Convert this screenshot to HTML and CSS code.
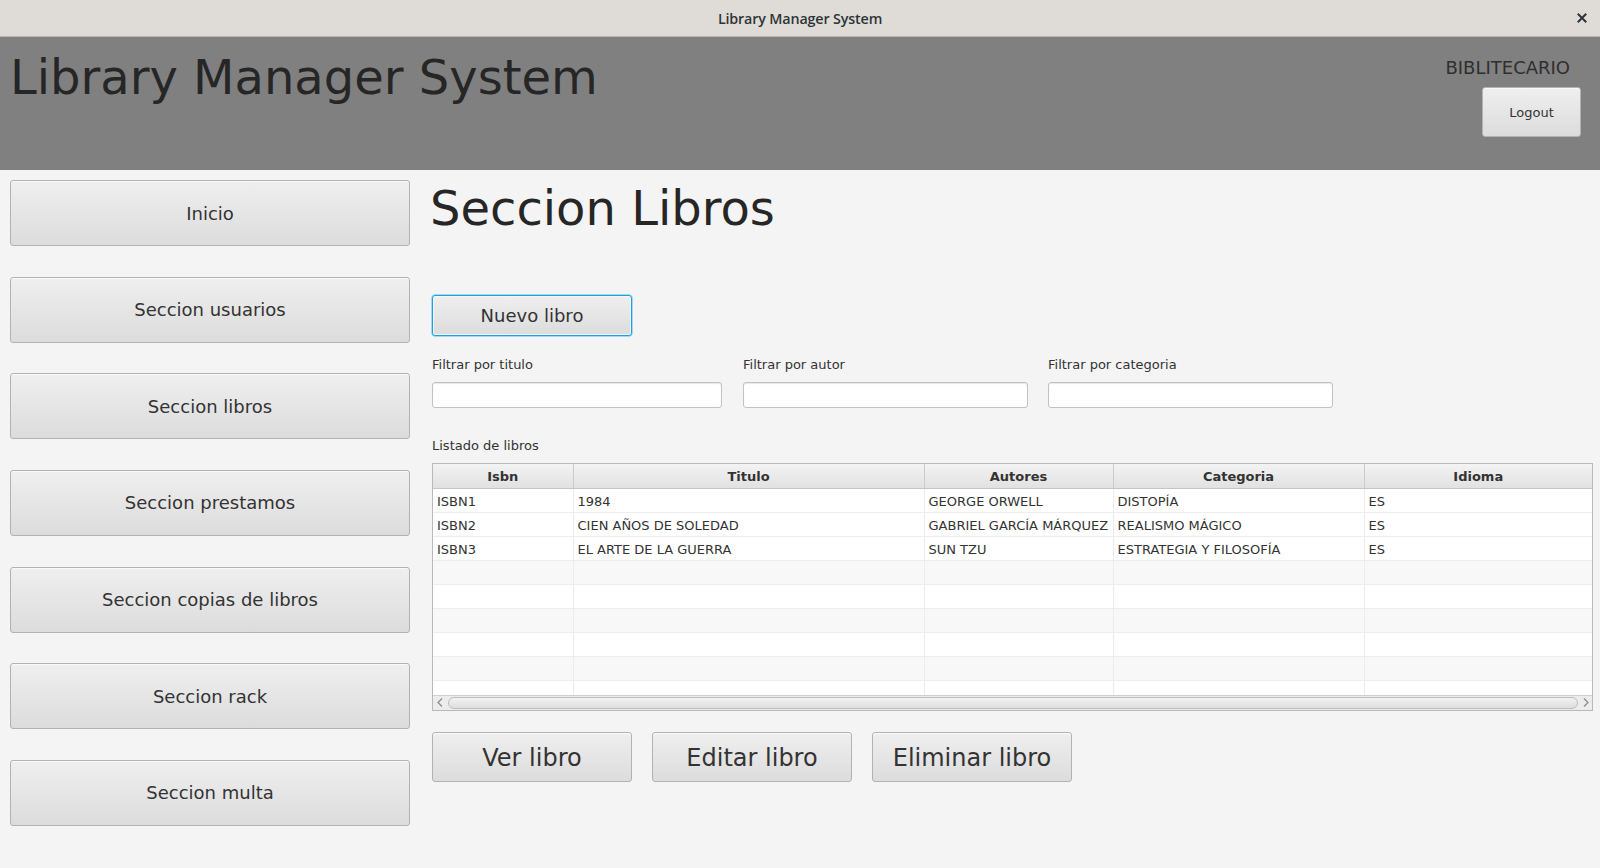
FILE: index.html
```html
<!DOCTYPE html>
<html lang="es">
<head>
<meta charset="utf-8">
<title>Library Manager System</title>
<link rel="stylesheet" href="styles.css">
</head>
<body>
<div class="titlebar">
  <span class="titlebar-text">Library Manager System</span>
  <span class="titlebar-close">
    <svg width="10" height="10" viewBox="0 0 10 10"><path d="M1.5 1.5 L8.5 8.5 M8.5 1.5 L1.5 8.5" stroke="#2e3436" stroke-width="2" stroke-linecap="square"/></svg>
  </span>
</div>
<header class="header">
  <h1 class="app-title">Library Manager System</h1>
  <div class="user-box">
    <div class="role">BIBLITECARIO</div>
    <button class="btn logout">Logout</button>
  </div>
</header>
<div class="main">
  <nav class="sidebar">
    <button class="btn nav-btn">Inicio</button>
    <button class="btn nav-btn">Seccion usuarios</button>
    <button class="btn nav-btn">Seccion libros</button>
    <button class="btn nav-btn">Seccion prestamos</button>
    <button class="btn nav-btn">Seccion copias de libros</button>
    <button class="btn nav-btn">Seccion rack</button>
    <button class="btn nav-btn">Seccion multa</button>
  </nav>
  <section class="content">
    <h2 class="section-title">Seccion Libros</h2>
    <button class="btn new-btn">Nuevo libro</button>
    <div class="filters">
      <div class="filter f1"><label class="small-label">Filtrar por titulo</label><input class="field" type="text"></div>
      <div class="filter f2"><label class="small-label">Filtrar por autor</label><input class="field" type="text"></div>
      <div class="filter f3"><label class="small-label">Filtrar por categoria</label><input class="field" type="text"></div>
    </div>
    <div class="small-label list-label">Listado de libros</div>
    <div class="table-wrap">
      <div class="table-body">
        <table class="grid">
          <colgroup><col class="c1"><col class="c2"><col class="c3"><col class="c4"><col class="c5"></colgroup>
          <thead>
            <tr><th>Isbn</th><th>Titulo</th><th>Autores</th><th>Categoria</th><th>Idioma</th></tr>
          </thead>
          <tbody>
            <tr class="w"><td>ISBN1</td><td>1984</td><td>GEORGE ORWELL</td><td>DISTOPÍA</td><td>ES</td></tr>
            <tr class="w"><td>ISBN2</td><td>CIEN AÑOS DE SOLEDAD</td><td>GABRIEL GARCÍA MÁRQUEZ</td><td>REALISMO MÁGICO</td><td>ES</td></tr>
            <tr class="w"><td>ISBN3</td><td>EL ARTE DE LA GUERRA</td><td>SUN TZU</td><td>ESTRATEGIA Y FILOSOFÍA</td><td>ES</td></tr>
            <tr class="g"><td></td><td></td><td></td><td></td><td></td></tr>
            <tr class="w"><td></td><td></td><td></td><td></td><td></td></tr>
            <tr class="g"><td></td><td></td><td></td><td></td><td></td></tr>
            <tr class="w"><td></td><td></td><td></td><td></td><td></td></tr>
            <tr class="g"><td></td><td></td><td></td><td></td><td></td></tr>
            <tr class="w"><td></td><td></td><td></td><td></td><td></td></tr>
          </tbody>
        </table>
      </div>
      <div class="hscroll">
        <span class="arrow">
          <svg width="6" height="9" viewBox="0 0 6 9"><path d="M5 0.5 L1 4.5 L5 8.5" fill="none" stroke="#8a8a8a" stroke-width="1.2"/></svg>
        </span>
        <span class="thumb"></span>
        <span class="arrow">
          <svg width="6" height="9" viewBox="0 0 6 9"><path d="M1 0.5 L5 4.5 L1 8.5" fill="none" stroke="#8a8a8a" stroke-width="1.2"/></svg>
        </span>
      </div>
    </div>
    <div class="actions">
      <button class="btn action-btn">Ver libro</button>
      <button class="btn action-btn">Editar libro</button>
      <button class="btn action-btn">Eliminar libro</button>
    </div>
  </section>
</div>
</body>
</html>
```
FILE: styles.css
```css
* { box-sizing: border-box; }
html, body { margin: 0; padding: 0; }
body {
  width: 1600px;
  height: 868px;
  overflow: hidden;
  background: #f4f4f4;
  font-family: "DejaVu Sans", sans-serif;
  color: #333333;
}

.titlebar {
  height: 37px;
  background: #dfdcd8;
  border-bottom: 1px solid #bdb6ae;
  display: flex;
  align-items: center;
  justify-content: center;
  position: relative;
}
.titlebar-text {
  font-family: "Open Sans", sans-serif;
  font-weight: 600;
  font-size: 14.3px;
  color: #2e3436;
  letter-spacing: -0.15px;
}
.titlebar-close {
  position: absolute;
  right: 13px;
  top: 13px;
  width: 10px;
  height: 10px;
  display: flex;
}

.header {
  height: 133px;
  background: #808080;
  display: flex;
  justify-content: space-between;
  align-items: flex-start;
  padding: 0 19px 0 10px;
}
.app-title {
  margin: 16px 0 0 0;
  font-size: 48px;
  line-height: 48px;
  font-weight: normal;
  color: #262626;
}
.user-box {
  display: flex;
  flex-direction: column;
  align-items: flex-end;
  padding-top: 22px;
}
.role {
  font-size: 18px;
  line-height: 18px;
  color: #2f2f2f;
  margin-right: 11px;
}

.btn {
  font-family: "DejaVu Sans", sans-serif;
  color: #333333;
  background: linear-gradient(#efefef, #dcdcdc);
  border: 1px solid #b2b2b2;
  border-radius: 3px;
  box-shadow: inset 0 1px 0 #fafafa;
  padding: 0;
  margin: 0;
  cursor: default;
}
.logout {
  margin-top: 10px;
  width: 99px;
  height: 50px;
  font-size: 13px;
}

.main {
  display: flex;
  gap: 22px;
  padding: 10px 0 0 10px;
}
.sidebar {
  width: 400px;
  display: flex;
  flex-direction: column;
  gap: 30.65px;
}
.nav-btn {
  width: 400px;
  height: 66px;
  font-size: 18px;
}

.content {
  display: flex;
  flex-direction: column;
  align-items: flex-start;
  padding-top: 4.4px;
}
.section-title {
  margin: 0 0 0 -2px;
  font-size: 48px;
  line-height: 48px;
  font-weight: normal;
  color: #262626;
}
.new-btn {
  margin-top: 62.6px;
  width: 200px;
  height: 41px;
  font-size: 18px;
  border: 1px solid #1ba1e2;
  box-shadow: 0 0 0 0.5px #5ab9e6, inset 0 0 0 1px #f6f6f6;
}

.small-label {
  font-size: 13px;
  line-height: 13px;
  color: #333333;
}
.filters {
  display: flex;
  margin-top: 21.6px;
}
.filter {
  display: flex;
  flex-direction: column;
  gap: 11px;
}
.f1 { width: 290px; margin-right: 21px; }
.f2 { width: 285px; margin-right: 20px; }
.f3 { width: 285px; }
.field {
  width: 100%;
  height: 26px;
  background: #ffffff;
  border: 1px solid #c2c2c2;
  border-radius: 3px;
  box-shadow: inset 0 1px 1px #e8e8e8;
  margin: 0;
  padding: 0 6px;
  font-family: "DejaVu Sans", sans-serif;
  font-size: 13px;
}

.list-label {
  margin-top: 31.5px;
}

.table-wrap {
  margin-top: 10.5px;
  width: 1161px;
  height: 248px;
  border: 1px solid #b9b9b9;
  background: #ffffff;
  display: flex;
  flex-direction: column;
}
.table-body {
  height: 231px;
  overflow: hidden;
}
.grid {
  border-collapse: collapse;
  table-layout: fixed;
  width: 1159px;
  font-size: 13px;
  color: #333333;
}
.c1 { width: 140px; }
.c2 { width: 351px; }
.c3 { width: 189px; }
.c4 { width: 251px; }
.c5 { width: 228px; }
.grid th {
  height: 25px;
  padding: 2px 0 0 0;
  font-weight: bold;
  text-align: center;
  background: linear-gradient(#f3f3f3, #e1e1e1);
  border-right: 1px solid #cacaca;
  border-bottom: 1px solid #c4c4c4;
  color: #333333;
}
.grid th:last-child { border-right: none; }
.grid td {
  height: 24px;
  padding: 2px 0 0 4px;
  border-right: 1px solid #ececec;
  border-bottom: 1px solid #ededed;
  white-space: nowrap;
  overflow: hidden;
}
.grid td:last-child { border-right: none; }
.grid tr.w { background: #ffffff; }
.grid tr.g { background: #f8f8f8; }

.hscroll {
  height: 15px;
  border-top: 1px solid #d0d0d0;
  background: #ececec;
  display: flex;
  align-items: center;
  padding: 0 2px 0 3px;
  gap: 4px;
}
.arrow {
  width: 8px;
  display: flex;
  justify-content: center;
}
.thumb {
  flex: 1;
  height: 12px;
  border: 1px solid #bdbdbd;
  border-radius: 6px;
  background: linear-gradient(#f2f2f2, #dedede);
}

.actions {
  margin-top: 21px;
  display: flex;
  gap: 20px;
}
.action-btn {
  width: 200px;
  height: 50px;
  font-size: 24px;
  padding-top: 2px;
}
```
